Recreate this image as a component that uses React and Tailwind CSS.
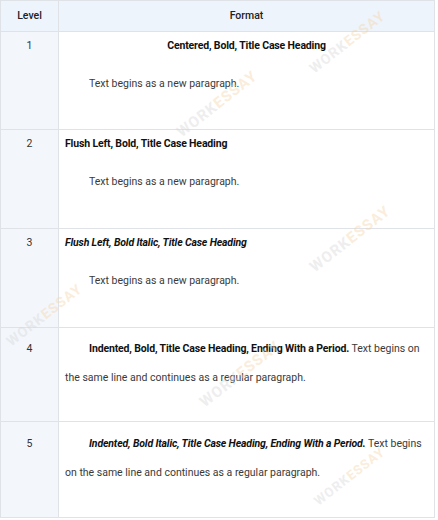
import React from "react";

function Watermark({ x, y, size = 15, rot = -38 }) {
  return (
    <div
      className="absolute pointer-events-none select-none font-bold tracking-[1px] whitespace-nowrap opacity-40"
      style={{ left: x, top: y, fontSize: size, transform: `rotate(${rot}deg)`, transformOrigin: "left top" }}
    >
      <span className="text-[#d6d6d6]">WORK</span>
      <span className="text-[#f5d3a6]">ESSAY</span>
    </div>
  );
}

function Row({ level, h, children, contentPad = "pt-[7px]", last = false }) {
  return (
    <div className={`grid grid-cols-[58px_1fr] ${h} ${last ? "" : "border-b border-[#dfe3e8]"}`}>
      <div className={`bg-[#f3f7fc] border-r border-[#dfe3e8] text-center text-[#333] ${contentPad}`}>
        {level}
      </div>
      <div className={`px-[6px] ${contentPad}`}>{children}</div>
    </div>
  );
}

export default function App() {
  return (
    <div className="w-[438px] h-[520px] bg-white relative overflow-hidden" style={{ fontFamily: "Roboto, 'Liberation Sans', sans-serif" }}>
      <div className="w-[435px] border border-[#dfe3e8] text-[10.5px] leading-[14px]">
        <div className="grid grid-cols-[58px_1fr] h-[31px] border-b border-[#dfe3e8] bg-[#eef4fb] font-medium text-[#222]">
          <div className="border-r border-[#dfe3e8] flex items-center justify-center">Level</div>
          <div className="flex items-center justify-center">Format</div>
        </div>

        <Row level="1" h="h-[98px]">
          <div className="text-center font-bold tracking-[-0.15px] text-[#111]">Centered, Bold, Title Case Heading</div>
          <p className="mt-[24px] indent-[24px] text-[#3a3a3a]">Text begins as a new paragraph.</p>
        </Row>

        <Row level="2" h="h-[99px]">
          <div className="font-bold tracking-[-0.15px] text-[#111]">Flush Left, Bold, Title Case Heading</div>
          <p className="mt-[24px] indent-[24px] text-[#3a3a3a]">Text begins as a new paragraph.</p>
        </Row>

        <Row level="3" h="h-[99px]">
          <div className="font-bold italic tracking-[-0.15px] text-[#111]">Flush Left, Bold Italic, Title Case Heading</div>
          <p className="mt-[24px] indent-[24px] text-[#3a3a3a]">Text begins as a new paragraph.</p>
        </Row>

        <Row level="4" h="h-[94px]" contentPad="pt-[6px] leading-[29px]">
          <p className="indent-[24px] text-[#3a3a3a] whitespace-nowrap">
            <span className="font-bold tracking-[-0.15px] text-[#111]">Indented, Bold, Title Case Heading, Ending With a Period.</span> Text begins on
            <br />
            the same line and continues as a regular paragraph.
          </p>
        </Row>

        <Row level="5" h="h-[95px]" contentPad="pt-[7px] leading-[29px]" last>
          <p className="indent-[24px] text-[#3a3a3a] whitespace-nowrap">
            <span className="font-bold italic tracking-[-0.15px] text-[#111]">Indented, Bold Italic, Title Case Heading, Ending With a Period.</span> Text begins
            <br />
            on the same line and continues as a regular paragraph.
          </p>
        </Row>
      </div>

      <Watermark x={305} y={62} size={14} />
      <Watermark x={172} y={125} size={15} />
      <Watermark x={305} y={260} size={15} />
      <Watermark x={2} y={335} size={14} />
      <Watermark x={195} y={395} size={15} />
      <Watermark x={310} y={495} size={13} />
    </div>
  );
}
